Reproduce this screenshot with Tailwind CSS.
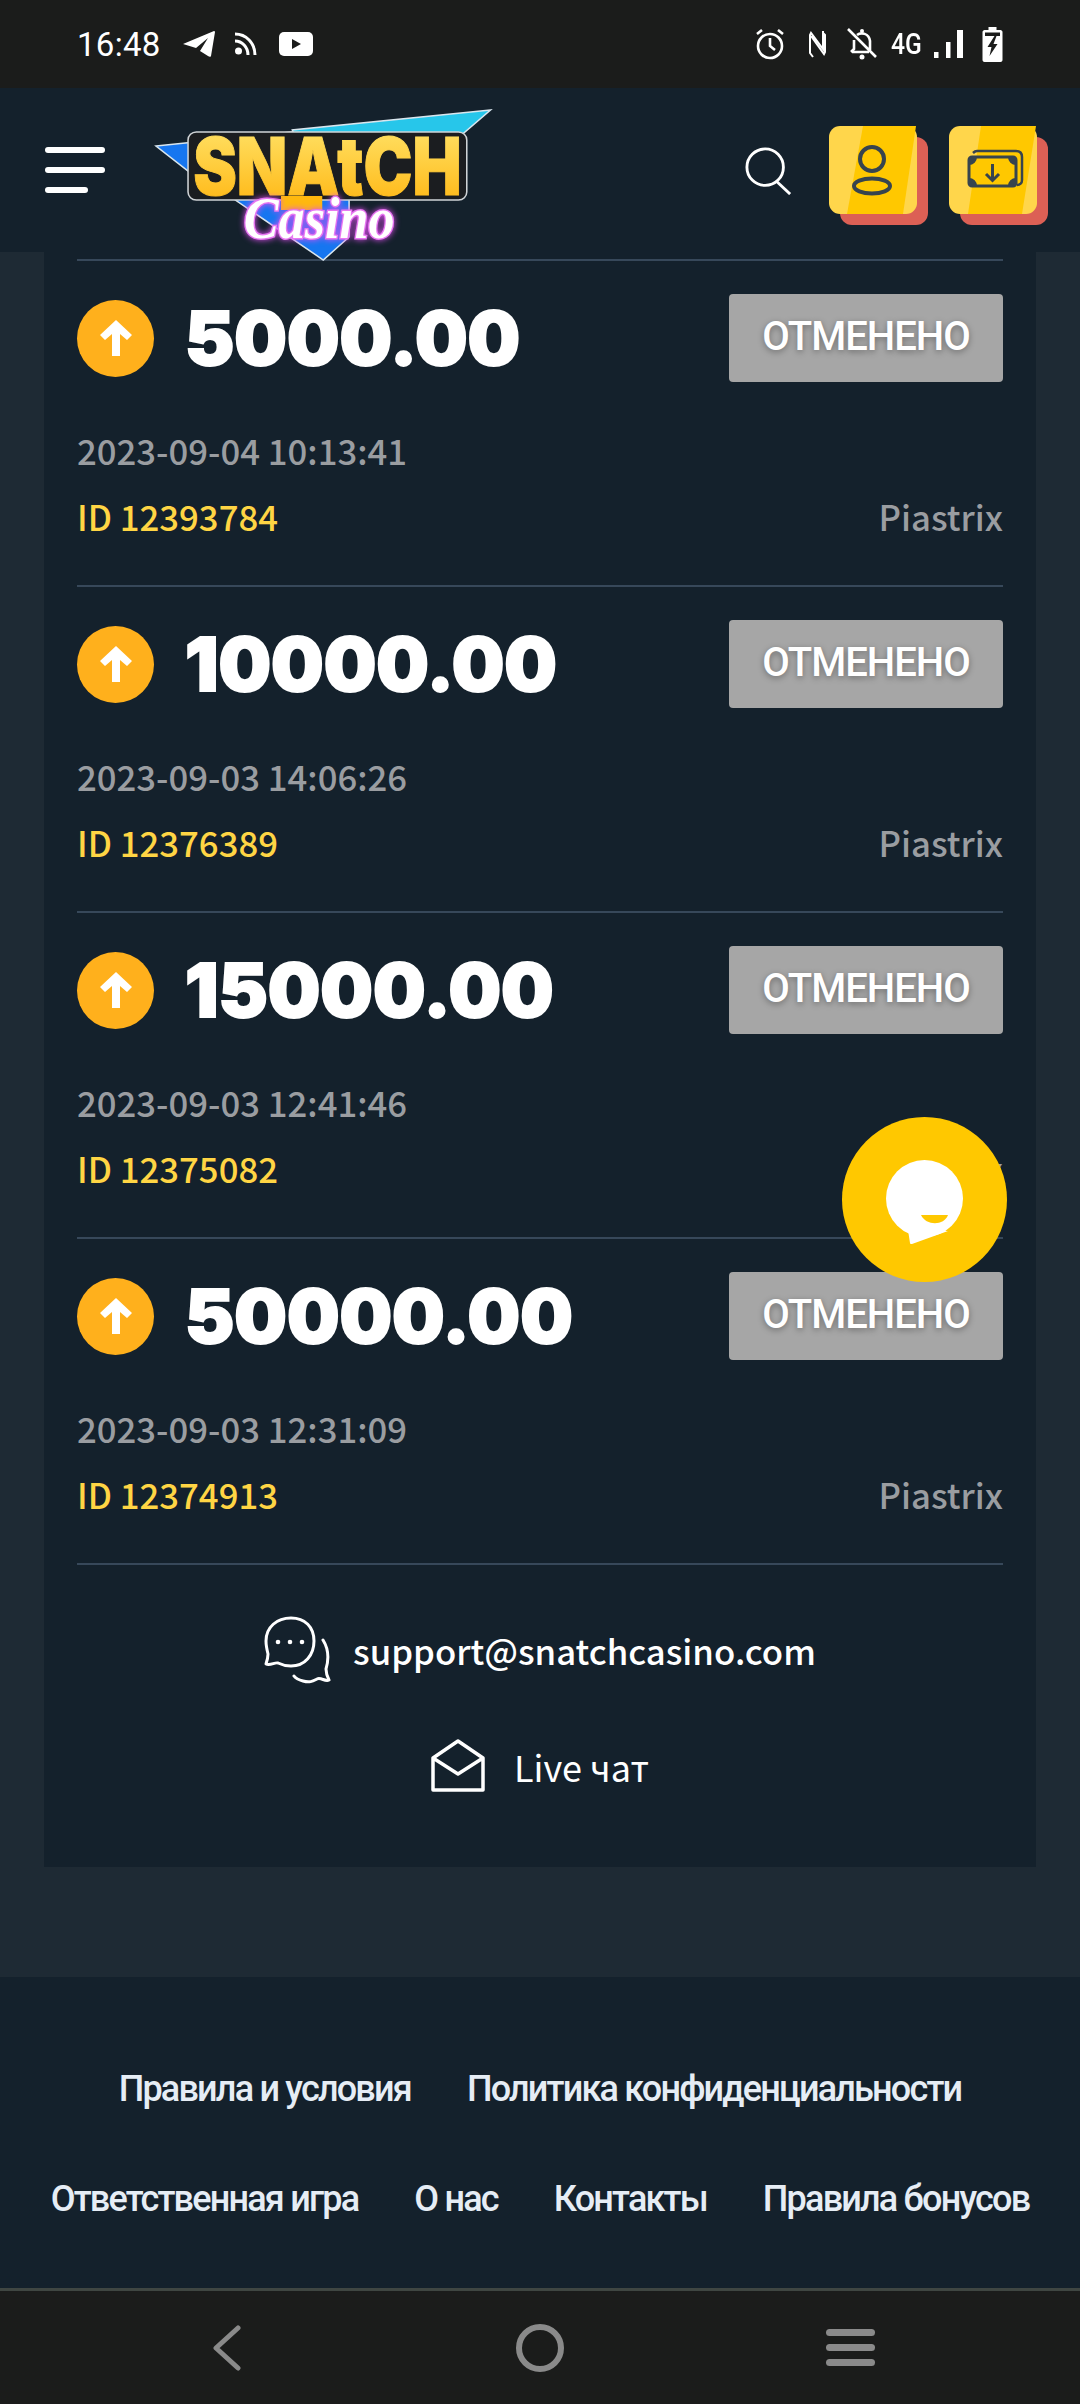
<!DOCTYPE html>
<html lang="ru">
<head>
<meta charset="utf-8">
<script src="https://cdn.jsdelivr.net/npm/@tailwindcss/browser@4"></script>
<title>Snatch Casino</title>
</head>
<body class="m-0">
<div class="relative w-[1080px] h-[2404px] overflow-hidden flex flex-col bg-[#1e2a34] font-['Noto_Sans_CJK_SC','Noto_Sans',sans-serif]">

  <!-- status bar -->
  <div class="h-[88px] shrink-0 bg-[#1b1c1b] flex items-center justify-between pl-[77px] pr-[77px] text-white">
    <div class="flex items-center">
      <span class="font-['Roboto',sans-serif] text-[33px] leading-none w-[106px] tracking-[0.3px]">16:48</span>
      <svg class="w-[32px] h-[28px]" viewBox="0 0 32 28" fill="#fff"><path d="M0 14 31 1c1 0 1 1 1 1l-4 24c0 1-2 1-3 0l-8-5 8-13-12 10Z"/></svg>
      <svg class="w-[22px] h-[24px] ml-[20px]" viewBox="0 0 22 24" fill="none" stroke="#fff" stroke-width="3"><circle cx="3.500" cy="19" r="3.500" fill="#fff" stroke="none"/><path d="M0 9c7 0 13 6 13 14M0 2c11 0 20 9 20 21"/></svg>
      <svg class="w-[34px] h-[24px] ml-[22px]" viewBox="0 0 34 24"><rect width="34" height="24" rx="5" fill="#fff"/><path d="M13 7v10l9-5z" fill="#1b1c1b"/></svg>
    </div>
    <div class="flex items-center">
      <svg class="w-[30px] h-[32px]" viewBox="0 0 30 32" fill="none" stroke="#fff" stroke-width="2.600"><circle cx="15" cy="18" r="12"/><path d="M15 10v8l5 4M2 6l5-4M28 6l-5-4"/></svg>
      <svg class="w-[18px] h-[28px] ml-[23px]" viewBox="0 0 18 28" fill="none" stroke="#fff" stroke-width="2"><path d="M5 27 2 23V5l1-2 12 16V1M15 3l2 2v17l-1 2L3 6"/></svg>
      <svg class="w-[32px] h-[32px] ml-[20px]" viewBox="0 0 32 32" fill="none" stroke="#fff" stroke-width="2.600"><path d="M2 1l28 28M6 24h17M8 12v9l-3 3M11 7c4-3 12-2 13 6v9"/><circle cx="16" cy="29" r="2.500" fill="#fff" stroke="none"/><circle cx="16" cy="3" r="2" fill="#fff" stroke="none"/></svg>
      <span class="font-['Roboto',sans-serif] text-[29px] font-medium leading-none ml-[13px] scale-x-[.85] origin-left w-[33px]">4G</span>
      <svg class="w-[30px] h-[28px] ml-[10px]" viewBox="0 0 30 28" fill="#fff"><rect y="22" width="4.500" height="6"/><rect x="12" y="12" width="4.500" height="16"/><rect x="23" width="6" height="28"/></svg>
      <svg class="w-[21px] h-[35px] ml-[18px]" viewBox="0 0 20 35"><path d="M6 0h8v3h4c1 0 2 1 2 2v28c0 1-1 2-2 2H2c-1 0-2-1-2-2V5c0-1 1-2 2-2h4z" fill="#fff"/><path d="M2.500 5.500h15V9h-15z" fill="#1b1c1b"/><path d="M12 9 5 20h4l-2 9 8-12h-4l3-8z" fill="#1b1c1b"/></svg>
    </div>
  </div>

  <!-- header -->
  <header class="relative z-10 h-[164px] shrink-0 bg-[#14212c] flex items-center pl-[45px] pr-[32px]">
    <div class="flex flex-col items-start gap-[14px] w-[60px]">
      <div class="h-[6px] w-[60px] bg-white rounded-full"></div>
      <div class="h-[6px] w-[60px] bg-white rounded-full"></div>
      <div class="h-[6px] w-[43px] bg-white rounded-full"></div>
    </div>
    <svg class="w-[351px] h-[160px] ml-[50px] self-start mt-[17px] shrink-0 overflow-visible" viewBox="150 105 340 160" preserveAspectRatio="none">
      <defs>
        <linearGradient id="lg" x1="0" y1="0" x2="0" y2="1"><stop offset="0" stop-color="#ffe66e"/><stop offset="1" stop-color="#ffb30c"/></linearGradient>
      </defs>
      <path d="M475 110 283 130 290 150H430Z" fill="#27c6ea" stroke="#d9e6ee" stroke-width="1.500"/>
      <path d="M151 146 283 132 240 190 182 171Z" fill="#1676f0" stroke="#d9e6ee" stroke-width="1.500"/>
      <path d="M225 198H338L338 237 313 260Z" fill="#1676f0" stroke="#d9e6ee" stroke-width="1.500"/>
      <rect x="182" y="132" width="270" height="68" rx="8" fill="#1b1d20" stroke="#cfd3d6" stroke-width="1.500"/>
      <rect x="272" y="196" width="40" height="14" fill="#ffb80e"/>
      <text x="187" y="195" textLength="260" lengthAdjust="spacingAndGlyphs" fill="url(#lg)" stroke="url(#lg)" stroke-width="1" font-family="'Inter',sans-serif" font-weight="900" font-size="80">SNAtCH</text>
      <text x="236" y="238" fill="#fff" stroke="#e878f2" stroke-width="3" paint-order="stroke" class="[filter:drop-shadow(0_0_3px_#e14cf2)]" font-family="'Liberation Serif',serif" font-style="italic" font-weight="700" font-size="60" textLength="146" lengthAdjust="spacingAndGlyphs">Casino</text>
    </svg>
    <div class="ml-auto flex items-center">
      <svg class="w-[48px] h-[48px] mr-[36px] mt-[2px]" viewBox="0 0 48 50" fill="none" stroke="#fff" stroke-width="3"><circle cx="20" cy="21" r="19"/><path d="M32 36 46 49"/></svg>
      <div class="relative w-[99px] h-[99px] mr-[21px] mt-[11px]">
        <div class="absolute left-[11px] top-[11px] w-[88px] h-[88px] rounded-[12px] bg-[#dc6055]"></div>
        <svg class="absolute left-0 top-0 w-[88px] h-[88px]" viewBox="0 0 88 88">
          <rect width="88" height="88" rx="11" fill="#ffd64b"/>
          <path d="M34 0H87L74 88H18Z" fill="#ffc800"/>
          <g fill="none" stroke="#37444e" stroke-width="4"><circle cx="43" cy="33" r="12"/><ellipse cx="43" cy="60" rx="18" ry="7.500"/></g>
        </svg>
      </div>
      <div class="relative w-[99px] h-[99px] mt-[11px]">
        <div class="absolute left-[11px] top-[11px] w-[88px] h-[88px] rounded-[12px] bg-[#dc6055]"></div>
        <svg class="absolute left-0 top-0 w-[88px] h-[88px]" viewBox="0 0 88 88">
          <rect width="88" height="88" rx="11" fill="#ffd64b"/>
          <path d="M32 0H87L73 88H19Z" fill="#ffc800"/>
          <path d="M24 27c1-1 2-2 4-2H67c4 0 6 2 6 6V54c0 3-2 5-5 5" fill="none" stroke="#37444e" stroke-width="2.500"/>
          <rect x="20" y="31" width="47" height="29" rx="3" fill="#ffc800" stroke="#37444e" stroke-width="3"/>
          <path d="M20 35a4 4 0 0 1 4-4h4a8 8 0 0 1-8 8ZM67 35a4 4 0 0 0-4-4h-4a8 8 0 0 0 8 8ZM20 56a4 4 0 0 0 4 4h4a8 8 0 0 0-8-8ZM67 56a4 4 0 0 1-4 4h-4a8 8 0 0 1 8-8Z" fill="#37444e"/>
          <path d="M43.500 38V54M37 48l6.500 6.500L50 48" fill="none" stroke="#37444e" stroke-width="3"/>
        </svg>
      </div>
    </div>
  </header>

  <!-- main -->
  <main class="h-[1725px] shrink-0 px-[44px]">
    <div class="bg-[#14212c] w-[992px] h-[1615px] pt-[7px] px-[33px]">
      <div class="border-t-2 border-[#37485a]"></div>

      <div class="h-[326px] border-b-2 border-[#37485a] pt-[33px]">
        <div class="flex justify-between items-start">
          <div class="flex items-center h-[88px]">
            <span class="w-[77px] h-[77px] rounded-full bg-[#ffb01c] flex items-center justify-center"><svg class="w-[32px] h-[36px]" viewBox="0 0 32 36" fill="#fff"><path d="M16 0 32 15l-5 5-7-6v22h-8V14l-7 6-5-5Z"/></svg></span>
            <span class="ml-[31px] font-['Inter',sans-serif] font-black text-[74px] leading-none text-white [-webkit-text-stroke:2px_white]">5000.00</span>
          </div>
          <div class="w-[274px] h-[88px] pb-[3px] rounded-[4px] bg-[#a6a6a6] flex items-center justify-center font-['Roboto',sans-serif] font-medium text-[40px] tracking-[-1px] text-white [text-shadow:0_2px_6px_rgba(0,0,0,0.35)]">ОТМЕНЕНО</div>
        </div>
        <div class="mt-[43px] text-[34.7px] font-medium leading-[50px] text-[#9a9da1]">2023-09-04 10:13:41</div>
        <div class="mt-[16px] flex justify-between text-[34.7px] font-medium leading-[50px]"><span class="text-[#ffd544]">ID 12393784</span><span class="text-[#9a9da1]">Piastrix</span></div>
      </div>

      <div class="h-[326px] border-b-2 border-[#37485a] pt-[33px]">
        <div class="flex justify-between items-start">
          <div class="flex items-center h-[88px]">
            <span class="w-[77px] h-[77px] rounded-full bg-[#ffb01c] flex items-center justify-center"><svg class="w-[32px] h-[36px]" viewBox="0 0 32 36" fill="#fff"><path d="M16 0 32 15l-5 5-7-6v22h-8V14l-7 6-5-5Z"/></svg></span>
            <span class="ml-[31px] font-['Inter',sans-serif] font-black text-[74px] leading-none text-white [-webkit-text-stroke:2px_white]">10000.00</span>
          </div>
          <div class="w-[274px] h-[88px] pb-[3px] rounded-[4px] bg-[#a6a6a6] flex items-center justify-center font-['Roboto',sans-serif] font-medium text-[40px] tracking-[-1px] text-white [text-shadow:0_2px_6px_rgba(0,0,0,0.35)]">ОТМЕНЕНО</div>
        </div>
        <div class="mt-[43px] text-[34.7px] font-medium leading-[50px] text-[#9a9da1]">2023-09-03 14:06:26</div>
        <div class="mt-[16px] flex justify-between text-[34.7px] font-medium leading-[50px]"><span class="text-[#ffd544]">ID 12376389</span><span class="text-[#9a9da1]">Piastrix</span></div>
      </div>

      <div class="h-[326px] border-b-2 border-[#37485a] pt-[33px]">
        <div class="flex justify-between items-start">
          <div class="flex items-center h-[88px]">
            <span class="w-[77px] h-[77px] rounded-full bg-[#ffb01c] flex items-center justify-center"><svg class="w-[32px] h-[36px]" viewBox="0 0 32 36" fill="#fff"><path d="M16 0 32 15l-5 5-7-6v22h-8V14l-7 6-5-5Z"/></svg></span>
            <span class="ml-[31px] font-['Inter',sans-serif] font-black text-[74px] leading-none text-white [-webkit-text-stroke:2px_white]">15000.00</span>
          </div>
          <div class="w-[274px] h-[88px] pb-[3px] rounded-[4px] bg-[#a6a6a6] flex items-center justify-center font-['Roboto',sans-serif] font-medium text-[40px] tracking-[-1px] text-white [text-shadow:0_2px_6px_rgba(0,0,0,0.35)]">ОТМЕНЕНО</div>
        </div>
        <div class="mt-[43px] text-[34.7px] font-medium leading-[50px] text-[#9a9da1]">2023-09-03 12:41:46</div>
        <div class="mt-[16px] flex justify-between text-[34.7px] font-medium leading-[50px]"><span class="text-[#ffd544]">ID 12375082</span><span class="text-[#9a9da1]">Piastrix</span></div>
      </div>

      <div class="h-[326px] border-b-2 border-[#37485a] pt-[33px]">
        <div class="flex justify-between items-start">
          <div class="flex items-center h-[88px]">
            <span class="w-[77px] h-[77px] rounded-full bg-[#ffb01c] flex items-center justify-center"><svg class="w-[32px] h-[36px]" viewBox="0 0 32 36" fill="#fff"><path d="M16 0 32 15l-5 5-7-6v22h-8V14l-7 6-5-5Z"/></svg></span>
            <span class="ml-[31px] font-['Inter',sans-serif] font-black text-[74px] leading-none text-white [-webkit-text-stroke:2px_white]">50000.00</span>
          </div>
          <div class="w-[274px] h-[88px] pb-[3px] rounded-[4px] bg-[#a6a6a6] flex items-center justify-center font-['Roboto',sans-serif] font-medium text-[40px] tracking-[-1px] text-white [text-shadow:0_2px_6px_rgba(0,0,0,0.35)]">ОТМЕНЕНО</div>
        </div>
        <div class="mt-[43px] text-[34.7px] font-medium leading-[50px] text-[#9a9da1]">2023-09-03 12:31:09</div>
        <div class="mt-[16px] flex justify-between text-[34.7px] font-medium leading-[50px]"><span class="text-[#ffd544]">ID 12374913</span><span class="text-[#9a9da1]">Piastrix</span></div>
      </div>

      <div class="mt-[51px] flex items-center justify-center text-white text-[34.7px] leading-[50px] font-medium">
        <svg class="w-[68px] h-[68px] mr-[21px]" viewBox="0 0 68 68" fill="none" stroke="#fff" stroke-width="3" stroke-linecap="round" stroke-linejoin="round">
          <path d="M27 2C13 2 2 11 2 25c0 5 1 9 2 13 0 4-1 7-2 10 4 2 9-2 12-1 4 2 8 3 13 3 14 0 23-11 23-25C50 11 41 2 27 2Z"/>
          <path d="M59 24c5 8 6 19 3 29 0 4 1 7 3 11-4 2-8-3-12-1-4 2-7 4-14 2-4-1-7-2-9-5"/>
          <circle cx="14" cy="26" r="2.300" fill="#fff" stroke="none"/><circle cx="26" cy="26" r="2.300" fill="#fff" stroke="none"/><circle cx="38" cy="26" r="2.300" fill="#fff" stroke="none"/>
        </svg>
        <span>support@snatchcasino.com</span>
      </div>
      <div class="mt-[55px] flex items-center justify-center text-white text-[36px] leading-[50px]">
        <svg class="w-[54px] h-[54px] mr-[29px]" viewBox="0 0 54 54" fill="none" stroke="#fff" stroke-width="3.500" stroke-linejoin="round"><path d="M2 19 27 2l25 17v32H2ZM2 19 27 35 52 19"/></svg>
        <span>Live чат</span>
      </div>
    </div>
  </main>

  <!-- footer -->
  <footer class="h-[311px] shrink-0 bg-[#14212c] pt-[87px] text-[#e6edf5] font-['Roboto',sans-serif] font-medium text-[36px] leading-[50px] tracking-[-1.8px]">
    <div class="flex justify-center gap-[56px]"><span>Правила и условия</span><span>Политика конфиденциальности</span></div>
    <div class="flex justify-center gap-[56px] mt-[60px]"><span>Ответственная игра</span><span>О нас</span><span>Контакты</span><span>Правила бонусов</span></div>
  </footer>

  <!-- nav bar -->
  <nav class="h-[116px] shrink-0 bg-[#1b1c1b] border-t-[3px] border-[#3f4642] flex items-center">
    <svg class="w-[30px] h-[46px] ml-[212px]" viewBox="0 0 30 46" fill="none" stroke="#8a8a8a" stroke-width="5" stroke-linecap="round" stroke-linejoin="round"><path d="M26 3 4 23l22 20"/></svg>
    <span class="block w-[48px] h-[48px] rounded-full border-[6px] border-[#8a8a8a] ml-[274px]"></span>
    <div class="flex flex-col gap-[8px] ml-[262px]">
      <span class="block w-[49px] h-[7px] rounded-full bg-[#8a8a8a]"></span>
      <span class="block w-[49px] h-[7px] rounded-full bg-[#8a8a8a]"></span>
      <span class="block w-[49px] h-[7px] rounded-full bg-[#8a8a8a]"></span>
    </div>
  </nav>

  <!-- floating chat -->
  <button class="absolute left-[842px] top-[1117px] w-[165px] h-[165px] rounded-full bg-[#ffc800] flex items-center justify-center z-20">
    <svg class="w-[77px] h-[84px] mt-[4px]" viewBox="0 0 77 84">
      <circle cx="38.500" cy="38.500" r="38.500" fill="#fff"/>
      <path d="M22 70 24 83c0 1 1 1 2 1L62 71Z" fill="#fff"/>
      <path d="M35 55H62C58 66 40 66 35 55Z" fill="#ffc800"/>
    </svg>
  </button>
</div>
</body>
</html>
